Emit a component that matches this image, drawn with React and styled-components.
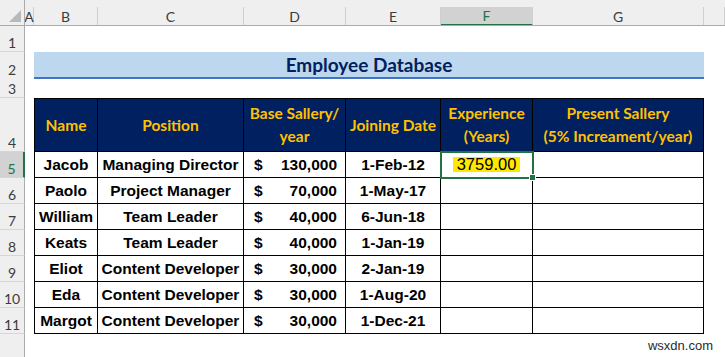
import React from "react";
import styled, { createGlobalStyle, css } from "styled-components";

const GlobalStyle = createGlobalStyle`
  html, body {
    margin: 0;
    padding: 0;
    background: #fff;
  }
  body {
    font-family: "Liberation Sans", Arial, sans-serif;
  }
`;

const NAVY = "#002060";
const GOLD = "#ffc000";
const EXCEL_GREEN = "#217346";
const TRACKS = "25px 9px 64px 146px 102px 95px 92px 171px 1fr";

const columns = ["A", "B", "C", "D", "E", "F", "G", ""];

const employees = [
  { name: "Jacob", position: "Managing Director", salary: "130,000", joined: "1-Feb-12", exp: "3759.00" },
  { name: "Paolo", position: "Project Manager", salary: "70,000", joined: "1-May-17" },
  { name: "William", position: "Team Leader", salary: "40,000", joined: "6-Jun-18" },
  { name: "Keats", position: "Team Leader", salary: "40,000", joined: "1-Jan-19" },
  { name: "Eliot", position: "Content Developer", salary: "30,000", joined: "2-Jan-19" },
  { name: "Eda", position: "Content Developer", salary: "30,000", joined: "1-Aug-20" },
  { name: "Margot", position: "Content Developer", salary: "30,000", joined: "1-Dec-21" },
];

const Sheet = styled.div`
  position: relative;
  width: 725px;
  height: 357px;
  overflow: hidden;
  display: flex;
  flex-direction: column;
  background: #fff;
`;

const SheetRow = styled.div`
  display: grid;
  grid-template-columns: ${TRACKS};
  height: ${({ $height }) => $height}px;
  flex-shrink: 0;
`;

const HeaderBar = styled(SheetRow)`
  height: 26px;
  background: #efefef;
  border-bottom: 1px solid #ababab;
  box-sizing: border-box;
`;

const Corner = styled.div`
  border-right: 1px solid #ababab;
  display: flex;
  align-items: flex-end;
  justify-content: flex-end;
  padding: 0 3px 3px 0;
`;

const ColHead = styled.div`
  padding-top: 7px;
  overflow: hidden;
`;

const ColLabel = styled.div`
  height: 100%;
  box-sizing: border-box;
  display: flex;
  align-items: center;
  justify-content: center;
  border-right: 1px solid #cfcfcf;
  font-family: Lato, "Open Sans", sans-serif;
  font-size: 14px;
  color: #3c3c3c;
  ${({ $selected }) =>
    $selected &&
    css`
      background: #d2d2d2;
      color: ${EXCEL_GREEN};
      border-bottom: 2px solid ${EXCEL_GREEN};
      margin-bottom: -1px;
      height: calc(100% + 1px);
    `}
`;

const RowHead = styled.div`
  background: #efefef;
  border-right: 1px solid #ababab;
  border-bottom: 1px solid #d6d6d6;
  display: flex;
  align-items: flex-end;
  justify-content: center;
  padding-bottom: 1px;
  box-sizing: border-box;
  font-family: Lato, "Open Sans", sans-serif;
  font-size: 14px;
  line-height: 14px;
  color: #3c3c3c;
  ${({ $selected }) =>
    $selected &&
    css`
      background: #d2d2d2;
      color: ${EXCEL_GREEN};
      border-right: 2px solid ${EXCEL_GREEN};
    `}
`;

const Blank = styled.div``;

const TitleBand = styled.div`
  grid-column: 3 / 9;
  height: 27px;
  box-sizing: border-box;
  background: #bdd7ee;
  border-bottom: 2px solid #4472c4;
  display: flex;
  align-items: center;
  justify-content: center;
  font-family: Lato, "Open Sans", sans-serif;
  font-weight: 700;
  font-size: 19px;
  color: ${NAVY};
`;

const Cell = styled.div`
  box-sizing: border-box;
  border-right: 1px solid #000;
  border-bottom: 1px solid #000;
  display: flex;
  align-items: center;
  justify-content: center;
  text-align: center;
  white-space: nowrap;
  font-weight: 700;
  font-size: 15.5px;
  color: #000;
  ${({ $first }) => $first && css`border-left: 1px solid #000;`}
`;

const HeadCell = styled(Cell)`
  border-top: 1px solid #000;
  background: ${NAVY};
  color: ${GOLD};
  font-family: Lato, "Open Sans", sans-serif;
  font-size: 15.5px;
  line-height: 23px;
  white-space: normal;
`;

const MoneyCell = styled(Cell)`
  justify-content: space-between;
  padding: 0 8px 0 10px;
`;

const SelectedCell = styled(Cell)`
  position: relative;
  &::after {
    content: "";
    position: absolute;
    top: -1px;
    left: -1px;
    right: -2px;
    bottom: -2px;
    border: 2px solid ${EXCEL_GREEN};
  }
  &::before {
    content: "";
    position: absolute;
    right: -4px;
    bottom: -4px;
    width: 5px;
    height: 5px;
    background: ${EXCEL_GREEN};
    border: 1px solid #fff;
    z-index: 1;
  }
`;

const Highlight = styled.span`
  background: #ffe800;
  font-weight: 400;
  font-size: 16.5px;
  line-height: 15px;
  padding: 0 4px;
`;

const Watermark = styled.div`
  position: absolute;
  right: 12px;
  bottom: 4px;
  font-family: "Liberation Sans", Arial, sans-serif;
  font-size: 13px;
  color: #2a2a2a;
`;

const CornerMark = () => (
  <svg width="12" height="12" viewBox="0 0 12 12">
    <polygon points="12,0 12,12 0,12" fill="#b9b9b9" />
  </svg>
);

const headers = [
  "Name",
  "Position",
  <>Base Sallery/<br />year</>,
  "Joining Date",
  <>Experience<br />(Years)</>,
  <>Present Sallery<br />(5% Increament/year)</>,
];

const EmptyRow = ({ num, height }) => (
  <SheetRow $height={height}>
    <RowHead>{num}</RowHead>
  </SheetRow>
);

const DataRow = ({ num, item }) => {
  const selected = Boolean(item.exp);
  return (
    <SheetRow $height={26}>
      <RowHead $selected={selected}>{num}</RowHead>
      <Blank />
      <Cell $first>{item.name}</Cell>
      <Cell>{item.position}</Cell>
      <MoneyCell>
        <span>$</span>
        <span>{item.salary}</span>
      </MoneyCell>
      <Cell>{item.joined}</Cell>
      {selected ? (
        <SelectedCell>
          <Highlight>{item.exp}</Highlight>
        </SelectedCell>
      ) : (
        <Cell />
      )}
      <Cell />
    </SheetRow>
  );
};

export default function App() {
  return (
    <>
      <GlobalStyle />
      <Sheet>
        <HeaderBar>
          <Corner>
            <CornerMark />
          </Corner>
          {columns.map((c, i) => (
            <ColHead key={i}>
              <ColLabel $selected={c === "F"}>{c}</ColLabel>
            </ColHead>
          ))}
        </HeaderBar>

        <EmptyRow num={1} height={26} />
        <SheetRow $height={26}>
          <RowHead>2</RowHead>
          <TitleBand>Employee Database</TitleBand>
        </SheetRow>
        <EmptyRow num={3} height={20} />

        <SheetRow $height={54}>
          <RowHead>4</RowHead>
          <Blank />
          {headers.map((h, i) => (
            <HeadCell key={i} $first={i === 0}>
              <span>{h}</span>
            </HeadCell>
          ))}
        </SheetRow>

        {employees.map((e, i) => (
          <DataRow key={e.name} num={i + 5} item={e} />
        ))}
        <EmptyRow num="" height={30} />

        <Watermark>wsxdn.com</Watermark>
      </Sheet>
    </>
  );
}
